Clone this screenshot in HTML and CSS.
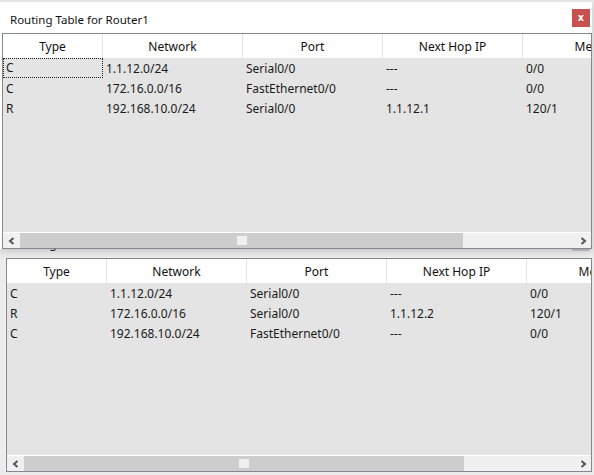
FILE: index.html
```html
<!DOCTYPE html>
<html>
<head>
<meta charset="utf-8">
<link rel="stylesheet" href="styles.css">
</head>
<body>
<div class="desk">
  <div class="win back">
    <div class="titlebar">
      <span class="title">Routing Table for Router2</span>
      <span class="close inactive">x</span>
    </div>
    <div class="pane">
      <div class="row head">
        <div class="cell">Type</div><div class="cell">Network</div><div class="cell">Port</div><div class="cell">Next Hop IP</div><div class="cell">Metric</div>
      </div>
      <div class="body">
        <div class="row"><div class="cell">C</div><div class="cell">1.1.12.0/24</div><div class="cell">Serial0/0</div><div class="cell">---</div><div class="cell">0/0</div></div>
        <div class="row"><div class="cell">R</div><div class="cell">172.16.0.0/16</div><div class="cell">Serial0/0</div><div class="cell">1.1.12.2</div><div class="cell">120/1</div></div>
        <div class="row"><div class="cell">C</div><div class="cell">192.168.10.0/24</div><div class="cell">FastEthernet0/0</div><div class="cell">---</div><div class="cell">0/0</div></div>
      </div>
      <div class="hscroll">
        <div class="sbtn"><svg width="8" height="8" viewBox="0 0 8 8"><path d="M5.5 1 L2 4 L5.5 7" fill="none" stroke="#555" stroke-width="2"/></svg></div>
        <div class="thumb thumb-b"><span class="grip"></span></div>
        <div class="track"></div>
        <div class="sbtn"><svg width="8" height="8" viewBox="0 0 8 8"><path d="M2.5 1 L6 4 L2.5 7" fill="none" stroke="#555" stroke-width="2"/></svg></div>
      </div>
    </div>
  </div>

  <div class="win front">
    <div class="titlebar">
      <span class="title">Routing Table for Router1</span>
      <span class="close">x</span>
    </div>
    <div class="pane">
      <div class="row head">
        <div class="cell">Type</div><div class="cell">Network</div><div class="cell">Port</div><div class="cell">Next Hop IP</div><div class="cell">Metric</div>
      </div>
      <div class="body">
        <div class="row"><div class="cell focus">C</div><div class="cell">1.1.12.0/24</div><div class="cell">Serial0/0</div><div class="cell">---</div><div class="cell">0/0</div></div>
        <div class="row"><div class="cell">C</div><div class="cell">172.16.0.0/16</div><div class="cell">FastEthernet0/0</div><div class="cell">---</div><div class="cell">0/0</div></div>
        <div class="row"><div class="cell">R</div><div class="cell">192.168.10.0/24</div><div class="cell">Serial0/0</div><div class="cell">1.1.12.1</div><div class="cell">120/1</div></div>
      </div>
      <div class="hscroll">
        <div class="sbtn"><svg width="8" height="8" viewBox="0 0 8 8"><path d="M5.5 1 L2 4 L5.5 7" fill="none" stroke="#555" stroke-width="2"/></svg></div>
        <div class="thumb thumb-f"><span class="grip"></span></div>
        <div class="track"></div>
        <div class="sbtn"><svg width="8" height="8" viewBox="0 0 8 8"><path d="M2.5 1 L6 4 L2.5 7" fill="none" stroke="#555" stroke-width="2"/></svg></div>
      </div>
    </div>
  </div>
</div>
</body>
</html>
```

FILE: styles.css
```css
html, body {
  margin: 0;
  padding: 0;
  background: #ececec;
  font-family: "Noto Sans", "Open Sans", sans-serif;
  font-size: 12px;
  color: #1a1a1a;
}

.desk {
  position: relative;
  width: 594px;
  height: 475px;
  overflow: hidden;
}

.win {
  position: absolute;
  display: flex;
  flex-direction: column;
  background: #fff;
}

.front {
  left: 0;
  top: 0;
  width: 592px;
  height: 247px;
  border-top: 2px solid #e6e6e6;
  box-shadow: 0 3px 8px rgba(0, 0, 0, 0.18);
}

.back {
  left: 4px;
  top: 225px;
  width: 588px;
  height: 247px;
  background: #efefef;
}

.titlebar {
  height: 31px;
  flex: none;
  display: flex;
  align-items: center;
  justify-content: space-between;
  padding: 0 2px 0 10px;
}

.back .titlebar {
  height: 33px;
}

.title {
  font-size: 11.5px;
  color: #111;
  position: relative;
  top: 2px;
}

.close {
  width: 18px;
  height: 18px;
  background: #c75050;
  color: #fff;
  font-weight: bold;
  font-size: 10px;
  line-height: 16px;
  text-align: center;
}

.close.inactive {
  background: #c8c8c8;
  color: #c8c8c8;
}

.pane {
  flex: 1;
  margin-left: 2px;
  border: 1px solid #84878c;
  display: flex;
  flex-direction: column;
  overflow: hidden;
  background: #e4e4e4;
}

.row {
  display: grid;
  grid-template-columns: 100px 140px 140px 140px 140px;
  height: 20px;
  align-items: center;
  white-space: nowrap;
}

.row.head {
  height: 24px;
  flex: none;
  background: #fff;
  align-items: stretch;
}

.head .cell {
  text-align: center;
  border-right: 1px solid #e3e3e3;
  display: flex;
  align-items: center;
  justify-content: center;
  padding: 0;
  color: #111;
}

.cell {
  padding-left: 3px;
  overflow: visible;
}

.body {
  flex: 1;
  background: #e4e4e4;
}

.focus {
  height: 20px;
  box-sizing: border-box;
  border: 1px dotted #222;
  padding-left: 2px;
  line-height: 18px;
}

.hscroll {
  flex: none;
  height: 15px;
  border-top: 1px solid #fff;
  display: flex;
  background: #f0f0f0;
}

.sbtn {
  width: 17px;
  flex: none;
  display: flex;
  align-items: center;
  justify-content: center;
  background: #f0f0f0;
}

.thumb {
  flex: none;
  background: #cdcdcd;
  display: flex;
  align-items: center;
  justify-content: center;
}

.thumb-f { width: 443px; }
.thumb-b { width: 440px; }

.grip {
  width: 10px;
  height: 9px;
  background: #f0f0f0;
}

.track {
  flex: 1;
  background: #f0f0f0;
}
```
